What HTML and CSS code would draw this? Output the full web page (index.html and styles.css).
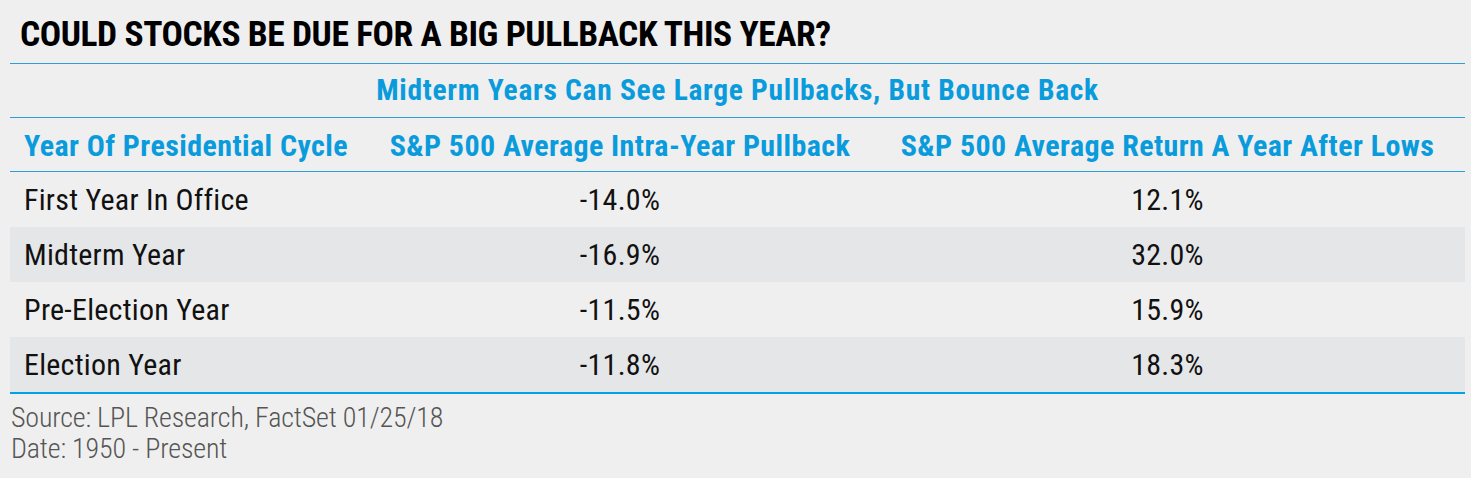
FILE: index.html
```html
<!DOCTYPE html>
<html lang="en">
<head>
<meta charset="utf-8">
<title>Could Stocks Be Due For A Big Pullback This Year?</title>
<link rel="stylesheet" href="styles.css">
</head>
<body>
<div class="chart">
  <h1 class="title">COULD STOCKS BE DUE FOR A BIG PULLBACK THIS YEAR?</h1>
  <div class="table">
    <div class="caption">Midterm Years Can See Large Pullbacks, But Bounce Back</div>
    <div class="row head">
      <div class="cell first">Year Of Presidential Cycle</div>
      <div class="cell">S&amp;P 500 Average Intra-Year Pullback</div>
      <div class="cell">S&amp;P 500 Average Return A Year After Lows</div>
    </div>
    <div class="row">
      <div class="cell first">First Year In Office</div>
      <div class="cell">-14.0%</div>
      <div class="cell">12.1%</div>
    </div>
    <div class="row alt">
      <div class="cell first">Midterm Year</div>
      <div class="cell">-16.9%</div>
      <div class="cell">32.0%</div>
    </div>
    <div class="row">
      <div class="cell first">Pre-Election Year</div>
      <div class="cell">-11.5%</div>
      <div class="cell">15.9%</div>
    </div>
    <div class="row alt last">
      <div class="cell first">Election Year</div>
      <div class="cell">-11.8%</div>
      <div class="cell">18.3%</div>
    </div>
  </div>
  <div class="notes">
    <p>Source: LPL Research, FactSet 01/25/18</p>
    <p>Date: 1950 - Present</p>
  </div>
</div>
</body>
</html>
```

FILE: styles.css
```css
html, body {
  margin: 0;
  padding: 0;
  background: #efefef;
}

body {
  font-family: Roboto, "Open Sans", "Liberation Sans", sans-serif;
  font-stretch: 75%;
  width: 1471px;
  height: 478px;
  overflow: hidden;
}

.chart {
  padding: 0 6px 0 10px;
}

.title {
  margin: 16px 0 11px 0;
  padding-left: 10px;
  font-size: 35.5px;
  line-height: 36px;
  font-weight: 700;
  letter-spacing: -0.45px;
  color: #000;
}

.table {
  width: 1455px;
  border-top: 1px solid #2a9fd8;
}

.caption {
  height: 53px;
  line-height: 53px;
  text-align: center;
  font-size: 29.5px;
  font-weight: 700;
  letter-spacing: 0.7px;
  color: #0a9bdc;
  border-bottom: 1px solid #2a9fd8;
}

.row {
  display: grid;
  grid-template-columns: 360px 500px 1fr;
  height: 55px;
  line-height: 55px;
  font-size: 30px;
  color: #111;
  letter-spacing: 0.25px;
}

.row.alt {
  background: #e5e6e8;
}

.row.head {
  height: 53px;
  line-height: 55px;
  font-weight: 700;
  color: #0a9bdc;
  border-bottom: 1px solid #2a9fd8;
  letter-spacing: 0.42px;
}

.row.last {
  border-bottom: 2px solid #00a2e8;
}

.cell {
  text-align: center;
  white-space: nowrap;
}

.cell.first {
  text-align: left;
  padding-left: 14px;
}

.row.head .cell.first {
  padding-left: 14px;
}

.notes {
  margin-top: 8px;
  padding-left: 1px;
  font-size: 28px;
  line-height: 31px;
  font-weight: 300;
  letter-spacing: -0.16px;
  color: #555;
}

.notes p {
  margin: 0;
}
```
